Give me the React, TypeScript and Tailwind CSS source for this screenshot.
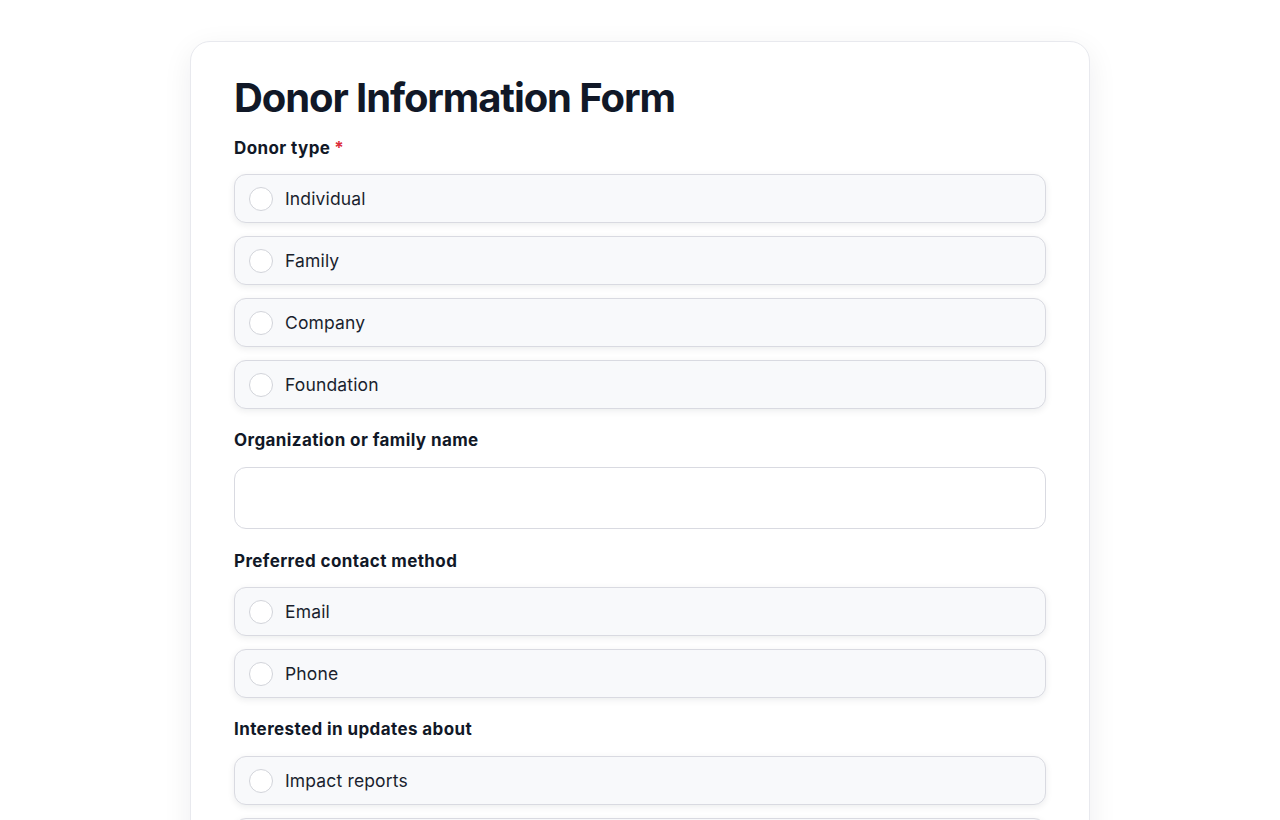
import React from "react";

function Option({ label }: { label: string }) {
  return (
    <label className="flex h-[49px] items-center gap-[12px] rounded-[12px] border border-[#d9dae1] bg-[#f8f9fb] pl-[14px] pr-4 shadow-[0_2px_7px_rgba(17,24,39,0.08)] cursor-pointer">
      <span className="h-[24px] w-[24px] shrink-0 rounded-full border border-[#d2d4da] bg-white" />
      <span className="text-[17.5px] leading-[24px] tracking-[0.15px] text-[#1a1f2e]">{label}</span>
    </label>
  );
}

function Field({
  label,
  required,
  children,
}: {
  label: string;
  required?: boolean;
  children: React.ReactNode;
}) {
  return (
    <div className="flex flex-col">
      <div className="mb-[14px] text-[17px] font-bold leading-[24px] tracking-[0.4px] text-[#111827]">
        {label}
        {required && <span className="ml-[4px] text-[#dc2f3c]">*</span>}
      </div>
      {children}
    </div>
  );
}

export default function App() {
  return (
    <div
      className="min-h-screen bg-white pt-[41px]"
      style={{ fontFamily: 'Inter, "Noto Sans", sans-serif' }}
    >
      <div className="mx-auto w-[900px] rounded-[20px] border border-[#e8e9ee] bg-white px-[43px] pt-[32px] pb-10 shadow-[0_8px_30px_rgba(17,24,39,0.07)]">
        <h1 className="mb-[14px] text-[40px] font-bold leading-[48px] tracking-[-1.1px] text-[#111827]">
          Donor Information Form
        </h1>
        <div className="flex flex-col gap-[19px]">
          <Field label="Donor type" required>
            <div className="flex flex-col gap-[13px]">
              <Option label="Individual" />
              <Option label="Family" />
              <Option label="Company" />
              <Option label="Foundation" />
            </div>
          </Field>
          <Field label="Organization or family name">
            <input
              type="text"
              className="mt-[1px] mb-[1px] h-[62px] w-full rounded-[12px] border border-[#d9dae1] bg-white px-4 text-[17px] outline-none"
            />
          </Field>
          <Field label="Preferred contact method">
            <div className="flex flex-col gap-[13px]">
              <Option label="Email" />
              <Option label="Phone" />
            </div>
          </Field>
          <Field label="Interested in updates about">
            <div className="flex flex-col gap-[13px] pt-[1px]">
              <Option label="Impact reports" />
              <Option label="Events" />
              <Option label="Volunteer opportunities" />
            </div>
          </Field>
        </div>
      </div>
    </div>
  );
}
